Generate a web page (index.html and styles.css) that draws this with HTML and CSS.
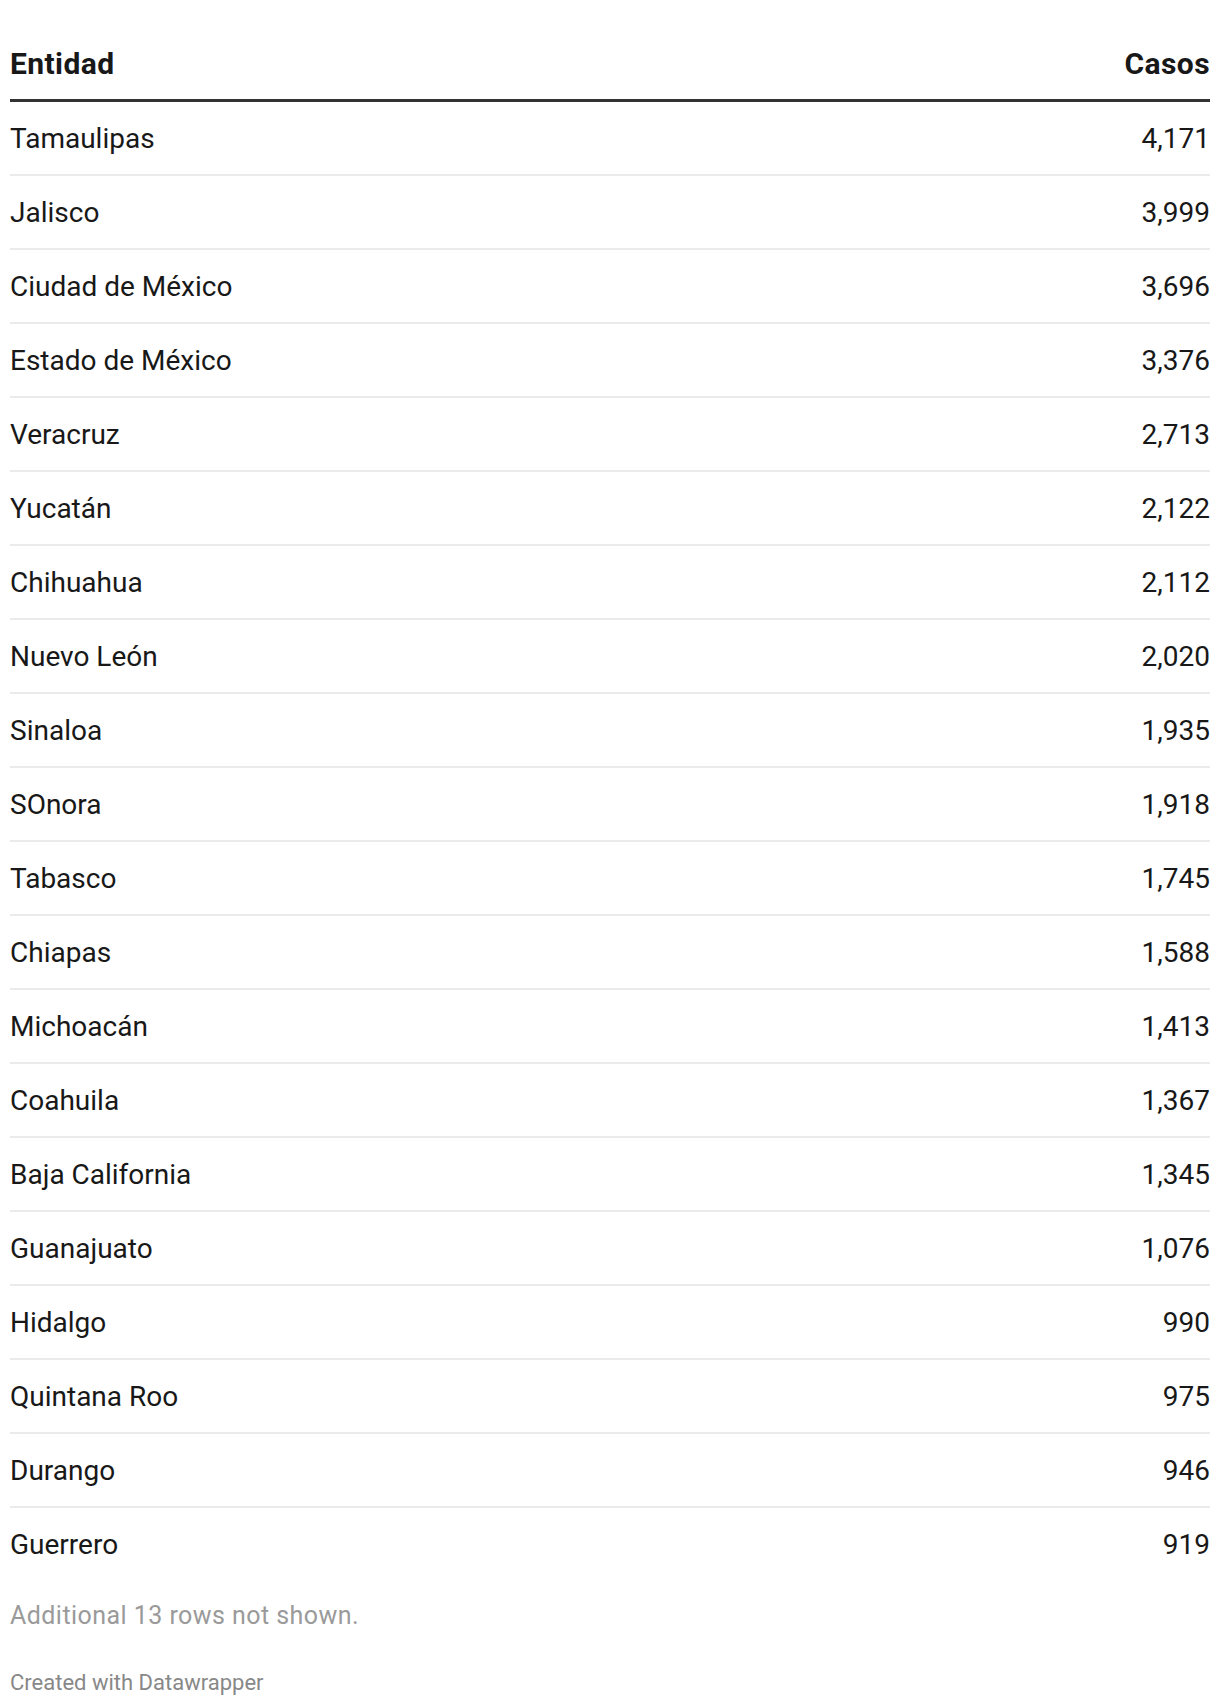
FILE: index.html
```html
<!DOCTYPE html>
<html lang="es">
<head>
<meta charset="utf-8">
<title>Casos por entidad</title>
<link rel="stylesheet" href="styles.css">
</head>
<body>
<div class="chart">
  <table class="data-table">
    <thead>
      <tr><th class="col-name">Entidad</th><th class="col-num">Casos</th></tr>
    </thead>
    <tbody>
      <tr><td class="col-name">Tamaulipas</td><td class="col-num">4,171</td></tr>
      <tr><td class="col-name">Jalisco</td><td class="col-num">3,999</td></tr>
      <tr><td class="col-name">Ciudad de México</td><td class="col-num">3,696</td></tr>
      <tr><td class="col-name">Estado de México</td><td class="col-num">3,376</td></tr>
      <tr><td class="col-name">Veracruz</td><td class="col-num">2,713</td></tr>
      <tr><td class="col-name">Yucatán</td><td class="col-num">2,122</td></tr>
      <tr><td class="col-name">Chihuahua</td><td class="col-num">2,112</td></tr>
      <tr><td class="col-name">Nuevo León</td><td class="col-num">2,020</td></tr>
      <tr><td class="col-name">Sinaloa</td><td class="col-num">1,935</td></tr>
      <tr><td class="col-name">SOnora</td><td class="col-num">1,918</td></tr>
      <tr><td class="col-name">Tabasco</td><td class="col-num">1,745</td></tr>
      <tr><td class="col-name">Chiapas</td><td class="col-num">1,588</td></tr>
      <tr><td class="col-name">Michoacán</td><td class="col-num">1,413</td></tr>
      <tr><td class="col-name">Coahuila</td><td class="col-num">1,367</td></tr>
      <tr><td class="col-name">Baja California</td><td class="col-num">1,345</td></tr>
      <tr><td class="col-name">Guanajuato</td><td class="col-num">1,076</td></tr>
      <tr><td class="col-name">Hidalgo</td><td class="col-num">990</td></tr>
      <tr><td class="col-name">Quintana Roo</td><td class="col-num">975</td></tr>
      <tr><td class="col-name">Durango</td><td class="col-num">946</td></tr>
      <tr><td class="col-name">Guerrero</td><td class="col-num">919</td></tr>
    </tbody>
  </table>
  <p class="notes">Additional 13 rows not shown.</p>
  <p class="footer">Created with Datawrapper</p>
</div>
</body>
</html>
```

FILE: styles.css
```css
html, body {
  margin: 0;
  padding: 0;
  background: #ffffff;
}

body {
  font-family: Roboto, "Liberation Sans", Arial, sans-serif;
  color: #181818;
}

.chart {
  padding: 27px 10px 0;
}

.data-table {
  width: 100%;
  border-collapse: collapse;
  font-size: 28px;
  line-height: 32px;
}

.data-table th,
.data-table td {
  padding: 21px 0 19px;
  font-weight: 400;
}

.data-table th {
  padding: 21px 0 19px;
  font-size: 30px;
  letter-spacing: 0.4px;
  font-weight: 700;
  border-bottom: 3px solid #333333;
}

.data-table tbody tr {
  border-bottom: 2px solid #ebebeb;
}

.data-table tbody tr:last-child {
  border-bottom: none;
}

.col-name {
  text-align: left;
}

.col-num {
  text-align: right;
}

.notes {
  margin: 21px 0 0;
  font-size: 25px;
  line-height: 30px;
  letter-spacing: 0.45px;
  color: #9a9a9a;
}

.footer {
  margin: 37px 0 0;
  font-size: 22px;
  line-height: 30px;
  color: #888888;
}
```
